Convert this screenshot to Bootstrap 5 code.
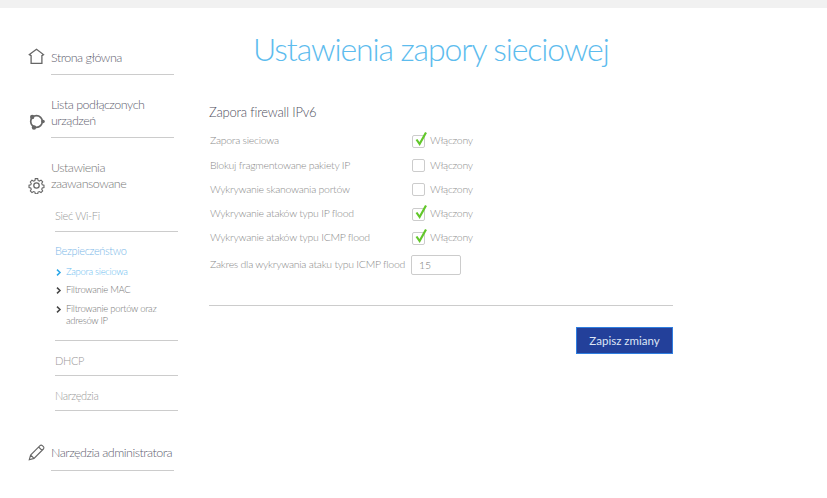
<!DOCTYPE html>
<html lang="pl">
<head>
<meta charset="utf-8">
<title>Ustawienia zapory sieciowej</title>
<link href="https://cdn.jsdelivr.net/npm/bootstrap@5.3.0/dist/css/bootstrap.min.css" rel="stylesheet">
<style>
html,body{height:100%;overflow:hidden}
body{font-family:Lato,"Liberation Sans",sans-serif;font-weight:300;color:#6f6f76;background:#fff}
.topband{height:8px;background:#f1f1f1}
.shell{width:827px}
.sidenav{width:209px;flex:none;padding-top:29px}
.navitem{position:relative;margin-left:51px;width:123px;border-bottom:1px solid #ccc;font-size:12.5px;letter-spacing:-.5px;line-height:16px;color:#5f5f70}
.navitem svg{position:absolute;left:-23px}
.it1{padding:13px 0 8px}.it1 svg{top:11px}
.it2{margin-top:22px;padding:0 0 8px}.it2 svg{top:16px}
.it3{margin-top:22px;padding:0}.it3 svg{top:17px}
.it4{margin-top:34px;padding:0 0 9px;white-space:nowrap}.it4 svg{top:-1px}
.it3txt{line-height:16px;color:#777}
.subnav{margin-left:55px;width:123px;font-size:11px;letter-spacing:-.35px;color:#999}
.subitem{border-bottom:1px solid #ccc;line-height:14px}
.s1{padding:17px 0 8px}
.s2{padding:12px 0 13px;color:#7ab8e8}
.s3{padding:13px 0 7px}
.s4{padding:13px 0 7px}
.leaf{list-style:none;margin:8px 0 0;padding:0;font-size:9.5px;letter-spacing:-.3px;line-height:12px;color:#777}
.leaf li{position:relative;padding-left:11px;margin-bottom:6px}
.leaf li:last-child{margin-bottom:0}
.leaf li:nth-child(2){margin-bottom:7px}
.leaf svg{position:absolute;left:1px;top:3px}
.leaf .on{color:#6cbdf0}
.mainpane{width:464px;flex:none}
.pagetitle{font-size:32px;font-weight:300;letter-spacing:-1.1px;line-height:44px;color:#5dbcee;margin:19px 0 0 44px;white-space:nowrap}
.sectitle{font-size:13px;font-weight:300;letter-spacing:-.2px;line-height:16px;color:#4f4f5e;margin:33px 0 9px}
.frow{height:24.3px;font-size:10.5px;letter-spacing:-.27px;color:#8a8a8a;margin-left:1px}
.flabel{width:202px;flex:none;white-space:nowrap}
.lastrow .flabel{width:201px}
.tick{position:relative;width:13px;height:13px;flex:none;border:1px solid #ccc;border-radius:2px;margin-right:5px;background:#fff}
.tick svg{position:absolute;left:1px;top:-5px}
.numbox{width:50px;height:20px;border:1px solid #ccc;border-radius:2px;padding:0 7px;font-size:10.5px;line-height:18px;color:#777;background:#fff;font-family:inherit;font-weight:300}
.lastrow{margin-top:2.5px}
.rule{border-top:1px solid #ccc;margin-top:28px}
.savebtn{width:97px;height:27px;margin-top:21px;padding:0;border:1px solid #2f7ee0;border-radius:0;background:#23409a;color:#dfe6f5;font-size:11.5px;font-weight:400;font-family:inherit}
.savebtn:hover{background:#23409a;color:#dfe6f5;border-color:#2f7ee0}
</style>
</head>
<body>
<div class="topband"></div>
<div class="shell d-flex">
  <nav class="sidenav">
    <div class="navitem it1">
      <svg width="17" height="17" viewBox="0 0 17 17" fill="none" stroke="#666" stroke-width="1.3"><path d="M1.4 6.6 8.5 1.2l7 5.4-1.6 1V15.3H3.1V7.6z"/></svg>
      Strona główna
    </div>
    <div class="navitem it2">
      <svg width="17" height="17" viewBox="0 0 17 17" fill="none" stroke="#666" stroke-width="1.7"><circle cx="8.5" cy="8.5" r="5.8"/><circle cx="4.2" cy="4" r="2.2" fill="#666" stroke="none"/><circle cx="15" cy="8.5" r="1.8" fill="#666" stroke="none"/><circle cx="6" cy="14.5" r="2.2" fill="#666" stroke="none"/></svg>
      Lista podłączonych urządzeń
    </div>
    <div class="navitem it3 border-0">
      <svg width="17" height="17" viewBox="0 0 17 17" fill="none" stroke="#666" stroke-width="1.25"><circle cx="8.5" cy="8.5" r="2.7"/><path d="M7.1.8h2.8l.4 2.1 1.5.7 1.9-1.1 1.9 2-1.1 1.8.6 1.5 2 .5v2.8l-2 .5-.6 1.4 1.1 1.9-1.9 1.9-1.9-1.1-1.5.6-.4 2.1H7.1l-.4-2.1-1.5-.6-1.9 1.1-1.9-1.9 1.1-1.9-.6-1.4-2-.5V8.5l2-.5.6-1.5-1.1-1.8 1.9-2 1.9 1.1 1.5-.7z" transform="translate(1.1 .9) scale(.87)"/></svg>
      <div class="it3txt">Ustawienia zaawansowane</div>
    </div>
    <div class="subnav">
      <div class="subitem s1">Sieć Wi-Fi</div>
      <div class="subitem s2">
        Bezpieczeństwo
        <ul class="leaf">
          <li class="on"><svg width="6" height="7" viewBox="0 0 6 7" fill="none" stroke="#2aa7e8" stroke-width="1.5"><path d="M1 .6 4 3.5 1 6.4"/></svg>Zapora sieciowa</li>
          <li><svg width="6" height="7" viewBox="0 0 6 7" fill="none" stroke="#444" stroke-width="1.5"><path d="M1 .6 4 3.5 1 6.4"/></svg>Filtrowanie MAC</li>
          <li><svg width="6" height="7" viewBox="0 0 6 7" fill="none" stroke="#444" stroke-width="1.5"><path d="M1 .6 4 3.5 1 6.4"/></svg>Filtrowanie portów oraz adresów IP</li>
        </ul>
      </div>
      <div class="subitem s3">DHCP</div>
      <div class="subitem s4">Narzędzia</div>
    </div>
    <div class="navitem it4">
      <svg width="17" height="17" viewBox="0 0 17 17" fill="none" stroke="#666" stroke-width="1.1"><path d="M1.2 15.8 2.6 11 12 1.6a1.6 1.6 0 0 1 2.3 0l1.1 1.1a1.6 1.6 0 0 1 0 2.3L6 14.4zM2.6 11 6 14.4M10.6 3l3.4 3.4"/></svg>
      Narzędzia administratora
    </div>
  </nav>
  <main class="mainpane">
    <h1 class="pagetitle">Ustawienia zapory sieciowej</h1>
    <h2 class="sectitle">Zapora firewall IPv6</h2>
    <div class="frow d-flex align-items-center"><span class="flabel">Zapora sieciowa</span><span class="tick"><svg width="14" height="16" viewBox="0 0 14 16" fill="none" stroke="#62c72a" stroke-width="2.2"><path d="M2.5 8.5 5.6 13 12 1.5"/></svg></span>Włączony</div>
    <div class="frow d-flex align-items-center"><span class="flabel">Blokuj fragmentowane pakiety IP</span><span class="tick"></span>Włączony</div>
    <div class="frow d-flex align-items-center"><span class="flabel">Wykrywanie skanowania portów</span><span class="tick"></span>Włączony</div>
    <div class="frow d-flex align-items-center"><span class="flabel">Wykrywanie ataków typu IP flood</span><span class="tick"><svg width="14" height="16" viewBox="0 0 14 16" fill="none" stroke="#62c72a" stroke-width="2.2"><path d="M2.5 8.5 5.6 13 12 1.5"/></svg></span>Włączony</div>
    <div class="frow d-flex align-items-center"><span class="flabel">Wykrywanie ataków typu ICMP flood</span><span class="tick"><svg width="14" height="16" viewBox="0 0 14 16" fill="none" stroke="#62c72a" stroke-width="2.2"><path d="M2.5 8.5 5.6 13 12 1.5"/></svg></span>Włączony</div>
    <div class="frow d-flex align-items-center lastrow"><span class="flabel">Zakres dla wykrywania ataku typu ICMP flood</span><input class="numbox" type="text" value="15"></div>
    <div class="rule"></div>
    <div class="d-flex justify-content-end"><button type="button" class="btn savebtn">Zapisz zmiany</button></div>
  </main>
</div>
</body>
</html>
